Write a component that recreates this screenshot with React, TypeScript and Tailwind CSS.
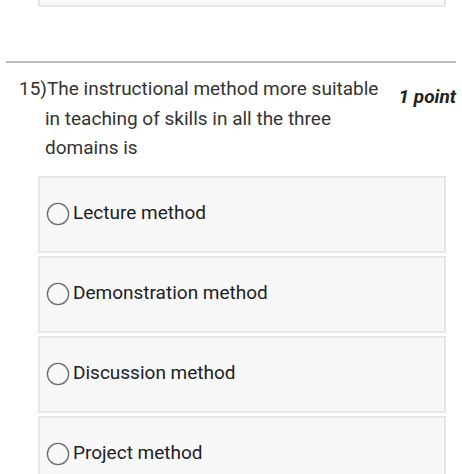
import React from "react";

const options = ["Lecture method", "Demonstration method", "Discussion method", "Project method"];

function Radio() {
  return (
    <svg width="24" height="24" viewBox="0 0 24 24" className="shrink-0">
      <circle cx="12" cy="12" r="10.6" fill="none" stroke="#6f6f6f" strokeWidth="1.4" />
    </svg>
  );
}

export default function App() {
  return (
    <div className="w-[462px] h-[474px] overflow-hidden bg-white text-[#212121]" style={{ fontFamily: "Roboto, 'Liberation Sans', sans-serif" }}>
      <div className="ml-[38px] w-[408px] h-[7px] border-x-2 border-b-2 border-[#e6e6e6] bg-[#f8f8f8]" />
      <div className="ml-[6px] mr-[6px] mt-[54px] h-[2px] bg-[#bdbdbd]" />
      <div className="flex justify-between pt-[11px] pr-[6px]">
        <div className="pl-[19px] text-[19px] leading-[29.5px] text-[#333]">
          <div>15)The instructional method more suitable</div>
          <div className="pl-[26px]">in teaching of skills in all the three</div>
          <div className="pl-[26px]">domains is</div>
        </div>
        <div className="pt-[12px] text-[19px] leading-[22px] font-bold italic text-[#222] whitespace-nowrap">1 point</div>
      </div>
      <div className="mt-[13px] flex flex-col gap-[3px] ml-[38px] w-[408px]">
        {options.map((o) => (
          <div key={o} className="h-[77px] border-2 border-[#e6e6e6] bg-[#f8f8f8] flex items-center pl-[6px]">
            <Radio />
            <span className="ml-[3px] mb-[2px] text-[19px] text-[#202124]">{o}</span>
          </div>
        ))}
      </div>
    </div>
  );
}
